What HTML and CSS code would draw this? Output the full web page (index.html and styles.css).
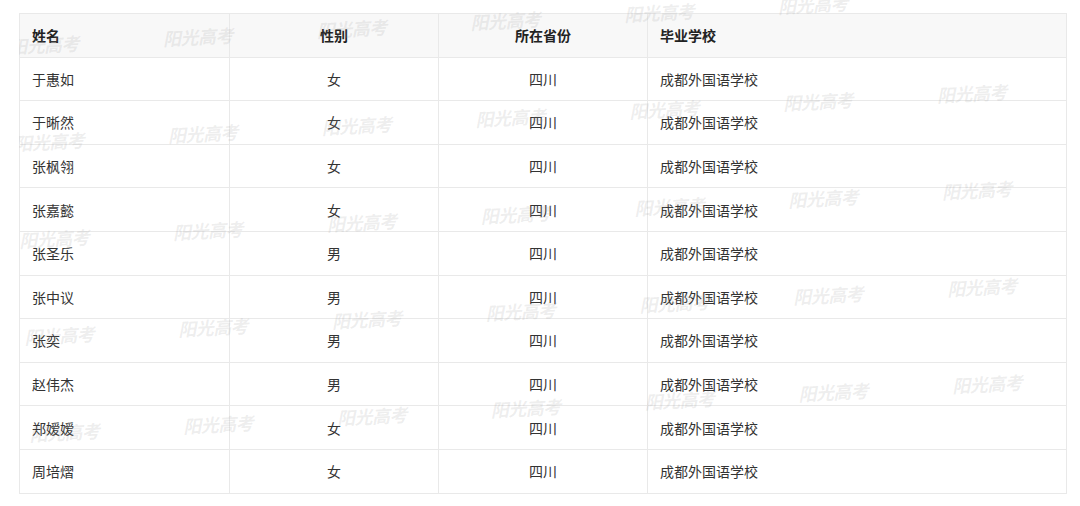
FILE: index.html
```html
<!DOCTYPE html>
<html lang="zh-CN">
<head>
<meta charset="utf-8">
<title>名单</title>
<link rel="stylesheet" href="styles.css">
</head>
<body>
<div class="page">
  <div class="table-wrap">
    <table class="list">
      <colgroup>
        <col class="c-name"><col class="c-sex"><col class="c-prov"><col class="c-school">
      </colgroup>
      <thead>
        <tr><th class="left">姓名</th><th>性别</th><th>所在省份</th><th class="left">毕业学校</th></tr>
      </thead>
      <tbody>
        <tr><td class="left">于惠如</td><td>女</td><td>四川</td><td class="left">成都外国语学校</td></tr>
        <tr><td class="left">于晰然</td><td>女</td><td>四川</td><td class="left">成都外国语学校</td></tr>
        <tr><td class="left">张枫翎</td><td>女</td><td>四川</td><td class="left">成都外国语学校</td></tr>
        <tr><td class="left">张嘉懿</td><td>女</td><td>四川</td><td class="left">成都外国语学校</td></tr>
        <tr><td class="left">张圣乐</td><td>男</td><td>四川</td><td class="left">成都外国语学校</td></tr>
        <tr><td class="left">张中议</td><td>男</td><td>四川</td><td class="left">成都外国语学校</td></tr>
        <tr><td class="left">张奕</td><td>男</td><td>四川</td><td class="left">成都外国语学校</td></tr>
        <tr><td class="left">赵伟杰</td><td>男</td><td>四川</td><td class="left">成都外国语学校</td></tr>
        <tr><td class="left">郑嫒嫒</td><td>女</td><td>四川</td><td class="left">成都外国语学校</td></tr>
        <tr><td class="left">周培熠</td><td>女</td><td>四川</td><td class="left">成都外国语学校</td></tr>
      </tbody>
    </table>
    <div class="wm-clip" aria-hidden="true">
      <div class="wm-grid">
        <span>阳光高考</span><span>阳光高考</span><span>阳光高考</span><span>阳光高考</span><span>阳光高考</span><span>阳光高考</span><span class="wm-off">阳光高考</span>
        <span>阳光高考</span><span>阳光高考</span><span>阳光高考</span><span>阳光高考</span><span>阳光高考</span><span>阳光高考</span><span>阳光高考</span>
        <span>阳光高考</span><span>阳光高考</span><span>阳光高考</span><span>阳光高考</span><span>阳光高考</span><span>阳光高考</span><span>阳光高考</span>
        <span>阳光高考</span><span>阳光高考</span><span>阳光高考</span><span>阳光高考</span><span>阳光高考</span><span>阳光高考</span><span>阳光高考</span>
        <span>阳光高考</span><span>阳光高考</span><span>阳光高考</span><span>阳光高考</span><span>阳光高考</span><span>阳光高考</span><span>阳光高考</span>
      </div>
    </div>
  </div>
</div>
</body>
</html>
```

FILE: styles.css
```css
html, body {
  margin: 0;
  padding: 0;
  background: #ffffff;
}

body {
  font-family: "Noto Sans CJK SC", "Liberation Sans", sans-serif;
  color: #333333;
  width: 1080px;
  height: 506px;
  overflow: hidden;
}

.page {
  padding: 13px 0 0 19px;
}

.table-wrap {
  position: relative;
  width: 1047px;
}

.list {
  width: 1047px;
  border-collapse: collapse;
  table-layout: fixed;
  font-size: 14px;
}

.c-name { width: 210px; }
.c-sex { width: 209px; }
.c-prov { width: 209px; }
.c-school { width: 419px; }

.list th,
.list td {
  border: 1px solid #e9e9e9;
  height: 42.6px;
  padding: 0 12px;
  text-align: center;
  vertical-align: middle;
  line-height: 20px;
  white-space: nowrap;
}

.list thead tr {
  background: #f8f8f8;
}

.list th {
  font-weight: 700;
  color: #222222;
}

.list td {
  color: #333333;
}

.list .left {
  text-align: left;
}

.wm-clip {
  position: absolute;
  left: 0;
  top: -13px;
  width: 1061px;
  height: 506px;
  overflow: hidden;
  pointer-events: none;
}

.wm-grid {
  position: absolute;
  left: -10px;
  top: 36px;
  display: grid;
  grid-template-columns: repeat(7, 154px);
  grid-auto-rows: 97px;
  transform-origin: 0 10px;
  transform: rotate(-3deg);
  font-family: "Noto Sans CJK SC", sans-serif;
  font-size: 18px;
  line-height: 20px;
  font-weight: 700;
  font-style: italic;
  color: rgba(150, 150, 150, 0.16);
  letter-spacing: -0.5px;
}

.wm-grid span {
  display: block;
  white-space: nowrap;
}

.wm-grid .wm-off {
  visibility: hidden;
}
```
